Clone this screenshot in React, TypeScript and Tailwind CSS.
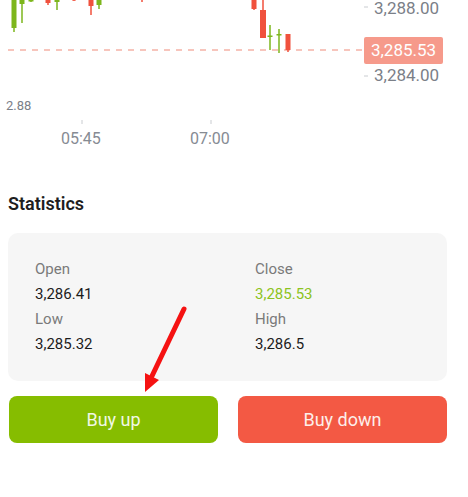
import React from "react";

type Candle = { x: number; bt: number; bb: number; wt: number; wb: number; up: boolean; w?: number };

const G = "#7db61c";
const R = "#f0513d";

const candles: Candle[] = [
  { x: 14, bt: -5, bb: 28, wt: -5, wb: 32, up: true, w: 5 },
  { x: 22, bt: -5, bb: 4, wt: -5, wb: 23, up: true, w: 5 },
  { x: 31, bt: -5, bb: 1.5, wt: -5, wb: 2, up: true, w: 5 },
  { x: 48, bt: -5, bb: 3, wt: -5, wb: 5, up: false, w: 5 },
  { x: 57, bt: -5, bb: 2, wt: -5, wb: 10, up: true, w: 5 },
  { x: 74, bt: -5, bb: 0.5, wt: -5, wb: 1, up: false, w: 4 },
  { x: 91, bt: -5, bb: 6, wt: -5, wb: 15, up: false, w: 5 },
  { x: 99, bt: -5, bb: 5, wt: -5, wb: 9, up: true, w: 5 },
  { x: 142, bt: -5, bb: -4, wt: -5, wb: 2, up: false, w: 2 },
  { x: 254, bt: -5, bb: 9, wt: -5, wb: 10, up: false, w: 5 },
  { x: 263, bt: 10, bb: 38, wt: -5, wb: 38, up: false, w: 6 },
  { x: 270, bt: 35.5, bb: 37, wt: 25, wb: 50, up: true, w: 5 },
  { x: 279, bt: 34, bb: 35.5, wt: 29, wb: 53, up: true, w: 5 },
  { x: 288, bt: 34, bb: 50, wt: 34, wb: 52, up: false, w: 5 },
];

function Chart() {
  return (
    <div className="relative h-[160px] w-full overflow-hidden">
      <svg className="absolute left-0 top-0" width={468} height={160} viewBox="0 0 468 160">
        <line x1={8} y1={50} x2={364} y2={50} stroke="#f5b2a7" strokeWidth={1.5} strokeDasharray="6 6" />
        {candles.map((c, i) => {
          const col = c.up ? G : R;
          const w = c.w ?? 5;
          return (
            <g key={i}>
              <line x1={c.x} y1={c.wt} x2={c.x} y2={c.wb} stroke={col} strokeWidth={1.5} />
              <rect x={c.x - w / 2} y={c.bt} width={w} height={Math.max(1.2, c.bb - c.bt)} fill={col} />
            </g>
          );
        })}
        <line x1={364} y1={7} x2={368} y2={7} stroke="#c9ccd0" strokeWidth={1} />
        <line x1={364} y1={76} x2={368} y2={76} stroke="#c9ccd0" strokeWidth={1} />
        <line x1={82} y1={120} x2={82} y2={124} stroke="#c9ccd0" strokeWidth={1} />
        <line x1={211} y1={120} x2={211} y2={124} stroke="#c9ccd0" strokeWidth={1} />
      </svg>
      <div className="absolute left-[374px] top-0 text-[17px] leading-[16px] text-[#7b8088]">3,288.00</div>
      <div className="absolute left-[364px] top-[37px] flex h-[27px] w-[79px] items-center justify-center rounded-[2px] bg-[#f69a8b] text-[17px] text-white">
        3,285.53
      </div>
      <div className="absolute left-[374px] top-[64px] text-[17px] leading-[22px] text-[#7b8088]">3,284.00</div>
      <div className="absolute left-[6px] top-[97px] text-[13px] leading-[18px] text-[#7b8088]">2.88</div>
      <div className="absolute left-[61px] top-[128px] text-[16px] leading-[22px] text-[#868b93]">05:45</div>
      <div className="absolute left-[190px] top-[128px] text-[16px] leading-[22px] text-[#868b93]">07:00</div>
    </div>
  );
}

function Stat({ label, value, green }: { label: string; value: string; green?: boolean }) {
  return (
    <div className="flex flex-col">
      <div className="h-[25px] text-[15px] leading-[25px] text-[#7a7a7a]">{label}</div>
      <div className={`h-[25px] text-[15px] leading-[25px] ${green ? "text-[#8cc320]" : "text-[#1c1c1c]"}`}>{value}</div>
    </div>
  );
}

export default function App() {
  return (
    <div className="relative h-[497px] w-[468px] overflow-hidden bg-white" style={{ fontFamily: "Roboto, 'Noto Sans', sans-serif" }}>
      <Chart />
      <div className="mt-[30px] px-[8px] text-[18px] font-semibold leading-[28px] text-[#1e1e1e]">Statistics</div>
      <div className="mx-[8px] mt-[15px] w-[439px] rounded-[10px] bg-[#f6f6f6] pb-[24px] pl-[27px] pt-[24px]">
        <div className="grid grid-cols-[220px_1fr]">
          <div className="flex flex-col">
            <Stat label="Open" value="3,286.41" />
            <Stat label="Low" value="3,285.32" />
          </div>
          <div className="flex flex-col">
            <Stat label="Close" value="3,285.53" green />
            <Stat label="High" value="3,286.5" />
          </div>
        </div>
      </div>
      <div className="mt-[15px] flex gap-[20px] pl-[9px] pr-[21px]">
        <button className="flex h-[47px] flex-1 items-center justify-center rounded-[8px] bg-[#86bd00] text-[18px] text-[#f1f8e4]">
          Buy up
        </button>
        <button className="flex h-[47px] flex-1 items-center justify-center rounded-[8px] bg-[#f35944] text-[18px] text-[#fdeeea]">
          Buy down
        </button>
      </div>
      <svg className="pointer-events-none absolute left-0 top-0" width={468} height={497} viewBox="0 0 468 497">
        <line x1={184} y1={309} x2={152} y2={376} stroke="#f51212" strokeWidth={5} strokeLinecap="round" />
        <polygon points="145,392 145,373 159,380" fill="#f51212" />
      </svg>
    </div>
  );
}
